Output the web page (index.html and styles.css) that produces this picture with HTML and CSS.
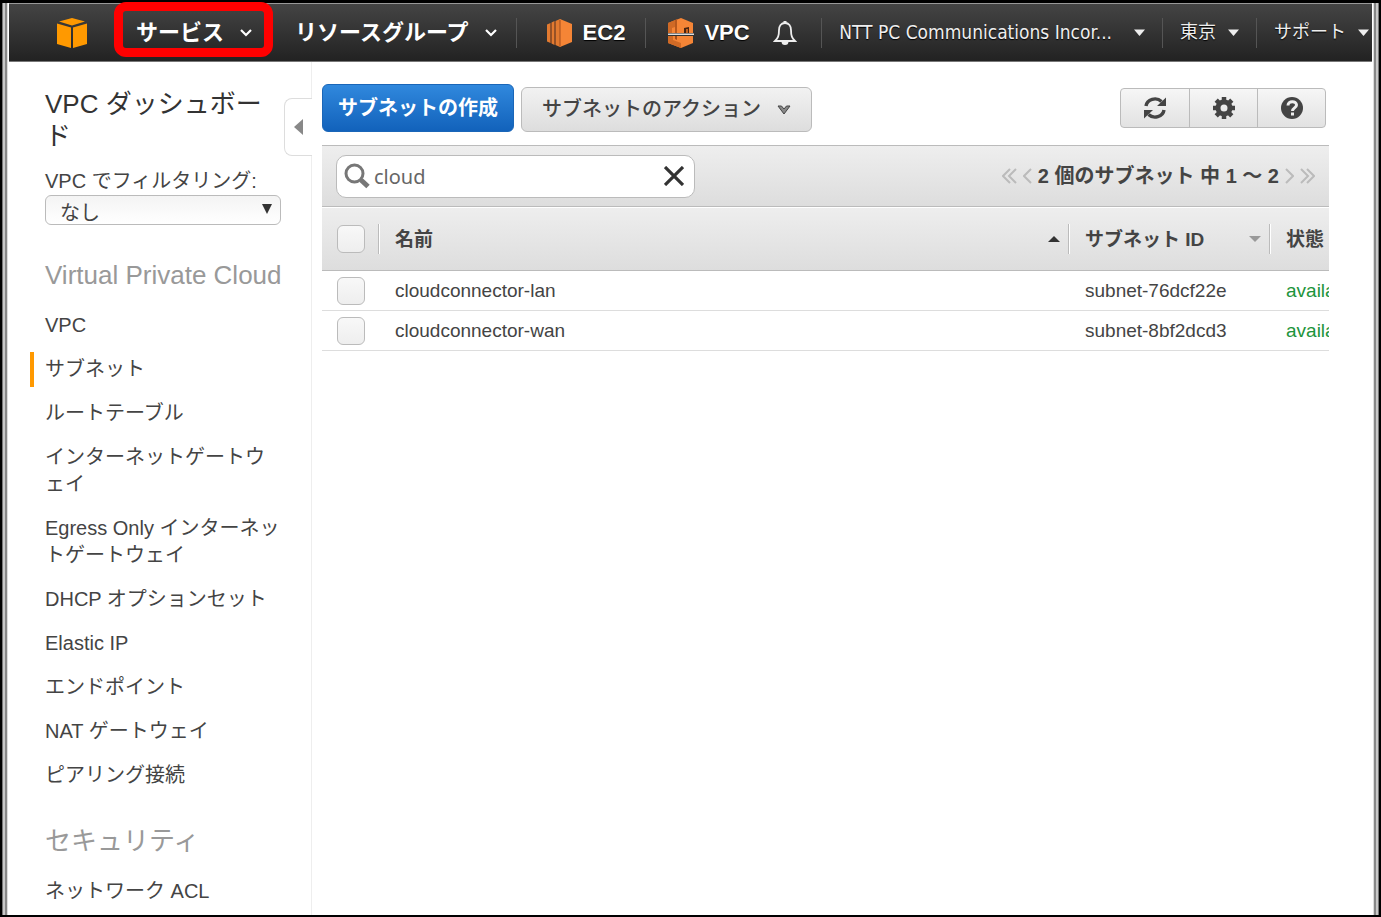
FILE: index.html
```html
<!DOCTYPE html>
<html lang="ja">
<head>
    <meta charset="UTF-8">
    <meta name="viewport" content="width=device-width, initial-scale=1.0">
    <title>VPC ダッシュボード</title>
    <link rel="stylesheet" href="styles.css">
</head>
<body>
<div class="window">

    <header class="topbar">
        <a href="#" class="logo" aria-label="AWS">
            <svg width="30" height="30" viewBox="0 0 30 30" fill="#ff9900">
                <path d="M15 0l13 3.500L15 7.500 2 3.500z"/>
                <path d="M0 5.500l14 4V30L0 26z"/>
                <path d="M30 5.500l-14 4V30l14-4z"/>
            </svg>
        </a>
        <button class="menu menu-services">サービス
            <svg width="12" height="8" viewBox="0 0 12 8"><path d="M1 1l5 5 5-5" fill="none" stroke="#fff" stroke-width="2.2"/></svg>
        </button>
        <button class="menu menu-groups">リソースグループ
            <svg width="12" height="8" viewBox="0 0 12 8"><path d="M1 1l5 5 5-5" fill="none" stroke="#fff" stroke-width="2.2"/></svg>
        </button>
        <a href="#" class="shortcut">
            <svg width="26" height="28" viewBox="0 0 26 28">
                <path d="M13 0l12 5v18l-12 5z" fill="#f58536"/>
                <path d="M8.500 2l4.500-2v28l-4.500-2z" fill="#e27a30"/>
                <path d="M4.500 3.500l3-1.500v24l-3-1.500z" fill="#e27a30"/>
                <path d="M0 5.500L3.500 4v20L0 22.500z" fill="#e27a30"/>
                <path d="M4 4v20M8 2.500v23M13 1v26" stroke="#a34f1c" fill="none"/>
            </svg>
            EC2
        </a>
        <a href="#" class="shortcut">
            <svg width="26" height="30" viewBox="0 0 26 30">
                <path d="M13 0l12 5v10H0V5z" fill="#f58536"/>
                <path d="M0 5l7-3v7l-3 1v5H0z" fill="#d06a26"/>
                <path d="M7 2l2-1v14H7z" fill="#b8591e"/>
                <path d="M16 10l5-1v6h-5z" fill="#4a2410"/>
                <path d="M18 11l2 0v4h-2z" fill="#c4621f"/>
                <path d="M0 15.500h26v1.500H0z" fill="#ddd"/>
                <path d="M0 18h25v7l-12 5-13-5z" fill="#f58536"/>
                <path d="M0 18h5v4l8 3v5L0 25z" fill="#d06a26"/>
                <path d="M7 18h2v4l-2-1z" fill="#a34f1c"/>
            </svg>
            VPC
        </a>
        <button class="bell" aria-label="通知">
            <svg width="24" height="26" viewBox="0 0 24 26">
                <path d="M12 3c-4 0-6 3-6 7 0 6-1 8-4 11h20c-3-3-4-5-4-11 0-4-2-7-6-7z" fill="none" stroke="#eee" stroke-width="1.8"/>
                <path d="M8.500 21.500a3.500 3.500 0 0 0 7 0zM10.500 1h3v2h-3z" fill="#eee"/>
            </svg>
        </button>
        <nav class="account">
            <button class="sub sub-name">NTT PC Communications Incor...
                <svg width="11" height="7" viewBox="0 0 11 7"><path d="M0 0.500h11L5.500 7z" fill="#eee"/></svg>
            </button>
            <button class="sub">東京
                <svg width="11" height="7" viewBox="0 0 11 7"><path d="M0 0.500h11L5.500 7z" fill="#eee"/></svg>
            </button>
            <button class="sub">サポート
                <svg width="11" height="7" viewBox="0 0 11 7"><path d="M0 0.500h11L5.500 7z" fill="#eee"/></svg>
            </button>
        </nav>
    </header>

    <div class="page">
        <aside class="sidebar">
            <button class="collapse" aria-label="閉じる">
                <svg width="9" height="16" viewBox="0 0 9 16"><path d="M9 0v16L0 8z" fill="#888"/></svg>
            </button>
            <a href="#" class="dashboard">VPC ダッシュボード</a>
            <label for="vpc-filter" class="filter-label">VPC でフィルタリング:</label>
            <div class="select">
                <select id="vpc-filter">
                    <option>なし</option>
                </select>
                <svg width="10" height="10" viewBox="0 0 10 10"><path d="M0 0h10L5 10z" fill="#333"/></svg>
            </div>

            <h2>Virtual Private Cloud</h2>
            <ul>
                <li><a href="#">VPC</a></li>
                <li class="active"><a href="#">サブネット</a></li>
                <li><a href="#">ルートテーブル</a></li>
                <li><a href="#">インターネットゲートウェイ</a></li>
                <li><a href="#">Egress Only インターネットゲートウェイ</a></li>
                <li><a href="#">DHCP オプションセット</a></li>
                <li><a href="#">Elastic IP</a></li>
                <li><a href="#">エンドポイント</a></li>
                <li><a href="#">NAT ゲートウェイ</a></li>
                <li><a href="#">ピアリング接続</a></li>
            </ul>

            <h2>セキュリティ</h2>
            <ul>
                <li><a href="#">ネットワーク ACL</a></li>
            </ul>
        </aside>

        <main class="content">
            <div class="actions">
                <button class="btn-primary">サブネットの作成</button>
                <button class="btn">サブネットのアクション
                    <svg width="14" height="10" viewBox="0 0 14 10"><path d="M1 1h3.500L7 4l2.500-3H13L7 9z" fill="#888" stroke="#444"/></svg>
                </button>
                <div class="tools">
                    <button aria-label="更新">
                        <svg width="24" height="22" viewBox="0 0 24 22">
                            <path d="M3 9a9 8 0 0 1 15.500-4.500M21 13a9 8 0 0 1-15.500 4.500" fill="none" stroke="#444" stroke-width="3.4"/>
                            <path d="M23 0.500V9h-9zM1 21.500V13h9z" fill="#444"/>
                        </svg>
                    </button>
                    <button aria-label="設定">
                        <svg width="24" height="24" viewBox="0 0 24 24">
                            <circle cx="12" cy="12" r="6" fill="none" stroke="#444" stroke-width="5"/>
                            <path d="M12 1v4M12 19v4M1 12h4M19 12h4M4.200 4.200l3 3M16.800 16.800l3 3M4.200 19.800l3-3M16.800 7.200l3-3" stroke="#444" stroke-width="4.5"/>
                        </svg>
                    </button>
                    <button aria-label="ヘルプ">
                        <svg width="24" height="24" viewBox="0 0 24 24">
                            <circle cx="12" cy="12" r="11" fill="#444"/>
                            <path d="M8 9.500c0-5 8.500-5 8.500-0.500 0 3-4 2.800-4 6" fill="none" stroke="#eee" stroke-width="3"/>
                            <path d="M11 16.500h3v3h-3z" fill="#eee"/>
                        </svg>
                    </button>
                </div>
            </div>

            <div class="searchbar">
                <div class="search">
                    <svg width="26" height="26" viewBox="0 0 26 26">
                        <circle cx="10.500" cy="10.500" r="8.500" fill="none" stroke="#777" stroke-width="3"/>
                        <path d="M17 17l7 6.500" stroke="#777" stroke-width="5"/>
                    </svg>
                    <input type="text" value="cloud" aria-label="検索">
                    <button aria-label="クリア">
                        <svg width="20" height="20" viewBox="0 0 20 20"><path d="M1 1l18 18M19 1L1 19" stroke="#333" stroke-width="3.2"/></svg>
                    </button>
                </div>
                <div class="pager">
                    <button aria-label="最初">
                        <svg width="15" height="16" viewBox="0 0 15 16"><path d="M8 1L1 8l7 7M14 1L7 8l7 7" fill="none" stroke="#bbb" stroke-width="2"/></svg>
                    </button>
                    <button aria-label="前へ">
                        <svg width="9" height="16" viewBox="0 0 9 16"><path d="M8 1L1 8l7 7" fill="none" stroke="#bbb" stroke-width="2"/></svg>
                    </button>
                    <span>2 個のサブネット 中 1 ～ 2</span>
                    <button aria-label="次へ">
                        <svg width="9" height="16" viewBox="0 0 9 16"><path d="M1 1l7 7-7 7" fill="none" stroke="#bbb" stroke-width="2"/></svg>
                    </button>
                    <button aria-label="最後">
                        <svg width="15" height="16" viewBox="0 0 15 16"><path d="M1 1l7 7-7 7M7 1l7 7-7 7" fill="none" stroke="#bbb" stroke-width="2"/></svg>
                    </button>
                </div>
            </div>

            <table class="subnets">
                <colgroup>
                    <col class="col-check">
                    <col>
                    <col class="col-id">
                    <col class="col-state">
                </colgroup>
                <thead>
                    <tr>
                        <th class="check"><input type="checkbox" aria-label="すべて選択"></th>
                        <th><div class="head">名前
                            <svg width="12" height="6" viewBox="0 0 12 6"><path d="M0 6h12L6 0z" fill="#333"/></svg>
                        </div></th>
                        <th><div class="head">サブネット ID
                            <svg width="12" height="6" viewBox="0 0 12 6"><path d="M0 0h12L6 6z" fill="#999"/></svg>
                        </div></th>
                        <th><div class="head">状態</div></th>
                    </tr>
                </thead>
                <tbody>
                    <tr>
                        <td class="check"><input type="checkbox" aria-label="cloudconnector-lan"></td>
                        <td>cloudconnector-lan</td>
                        <td>subnet-76dcf22e</td>
                        <td class="state">available</td>
                    </tr>
                    <tr>
                        <td class="check"><input type="checkbox" aria-label="cloudconnector-wan"></td>
                        <td>cloudconnector-wan</td>
                        <td>subnet-8bf2dcd3</td>
                        <td class="state">available</td>
                    </tr>
                </tbody>
            </table>
        </main>
    </div>

</div>
</body>
</html>
```
FILE: styles.css
```css
* {
    box-sizing: border-box;
}
body {
    margin: 0;
    height: 100vh;
    padding: 3px 2px 2px;
    background: #000;
    color: #444;
    font-family: "Liberation Sans", "Noto Sans CJK JP", sans-serif;
    font-size: 20px;
    line-height: 27px;
    overflow: hidden;
}
button {
    margin: 0;
    padding: 0;
    border: none;
    background: none;
    color: inherit;
    font: inherit;
    cursor: pointer;
}
a {
    color: inherit;
    text-decoration: none;
}
svg {
    display: block;
    flex: none;
}

/* window frame */
.window {
    display: flex;
    flex-direction: column;
    height: 100%;
    padding: 0 6px;
    background: linear-gradient(90deg, #777 0 1px, #c8c8c8 1px 3px, #888 3px 5px, #ddd 5px 6px, #fff 6px calc(100% - 6px), #ddd calc(100% - 6px) calc(100% - 5px), #888 calc(100% - 5px) calc(100% - 3px), #c8c8c8 calc(100% - 3px) calc(100% - 1px), #777 calc(100% - 1px));
}

/* top bar */
.topbar {
    display: flex;
    align-items: center;
    flex: none;
    height: 59px;
    margin: 0 1px;
    padding-left: 48px;
    border-top: 1px solid #999;
    border-bottom: 1px solid #777;
    background: linear-gradient(#444, #222);
    color: #fff;
    text-shadow: 0 1px 1px #000;
    white-space: nowrap;
}
.menu {
    display: flex;
    align-items: center;
    gap: 16px;
    font-size: 22px;
    font-weight: bold;
}
.menu-services {
    position: relative;
    margin: 0 43px 0 49px;
}
.menu-services::after {
    content: "";
    position: absolute;
    top: -17px;
    right: -21px;
    bottom: -11px;
    left: -22px;
    border: 9px solid #f00;
    border-radius: 12px;
}
.menu-groups {
    margin-right: 19px;
}
.shortcut {
    display: flex;
    align-items: center;
    gap: 10px;
    height: 30px;
    padding: 0 20px 0 22px;
    border-left: 1px solid #555;
    font-size: 22px;
    font-weight: bold;
}
.menu-groups + .shortcut {
    padding-left: 30px;
}
.bell {
    margin-left: 3px;
}
.account {
    display: flex;
    margin-left: auto;
    padding-right: 3px;
}
.sub {
    display: flex;
    align-items: center;
    gap: 12px;
    height: 30px;
    padding: 0 0 0 17px;
    border-left: 1px solid #555;
    color: #eee;
    font-size: 18px;
    text-shadow: inherit;
}
.sub + .sub {
    margin-left: 17px;
}
.sub-name {
    gap: 22px;
    font-family: "DejaVu Sans Condensed", "Noto Sans", sans-serif;
    font-size: 19px;
}

/* layout */
.page {
    display: flex;
    flex: 1;
    min-height: 0;
    overflow: hidden;
}
.sidebar {
    position: relative;
    flex: none;
    width: 304px;
    padding: 26px 30px 0 37px;
    border-right: 1px solid #eee;
}
.content {
    flex: 1;
    min-width: 0;
    margin: 22px 44px 0 10px;
}

/* sidebar */
.collapse {
    position: absolute;
    top: 36px;
    right: -1px;
    display: flex;
    align-items: center;
    width: 28px;
    height: 58px;
    padding-left: 9px;
    border: 1px solid #ddd;
    border-right: none;
    border-radius: 8px 0 0 8px;
    background: #fff;
}
.dashboard {
    display: block;
    width: 220px;
    color: #333;
    font-size: 26px;
    line-height: 32px;
}
.filter-label {
    display: block;
    margin-top: 16px;
}
.select {
    position: relative;
}
.select select {
    display: block;
    width: 100%;
    height: 30px;
    padding: 5px 14px 0;
    border: 1px solid #bbb;
    border-radius: 6px;
    background: linear-gradient(#f4f4f4, #fff);
    color: #444;
    font: inherit;
    line-height: 24px;
    appearance: none;
}
.select svg {
    position: absolute;
    top: 9px;
    right: 9px;
    pointer-events: none;
}
.sidebar h2 {
    margin: 34px 0 0;
    color: #999;
    font-size: 26px;
    font-weight: normal;
    line-height: 32px;
    white-space: nowrap;
}
.sidebar ul {
    margin: 21px 0 0;
    padding: 0;
    list-style: none;
}
.sidebar li {
    margin-bottom: 17px;
}
.sidebar .active {
    margin: -4px 0 13px -15px;
    padding: 4px 0 4px 11px;
    border-left: 4px solid #f90;
}
.sidebar ul + h2 {
    margin-top: 36px;
}

/* buttons */
.actions {
    display: flex;
    align-items: flex-end;
    gap: 7px;
    height: 48px;
}
.btn-primary {
    height: 48px;
    padding: 0 15px;
    border: 1px solid #1a66b8;
    border-radius: 6px;
    background: linear-gradient(#3088dd, #1262bb);
    color: #fff;
    font-weight: bold;
}
.btn {
    display: flex;
    align-items: center;
    gap: 16px;
    height: 45px;
    padding: 0 20px;
    border: 1px solid #bbb;
    border-radius: 6px;
    background: linear-gradient(#f2f2f2, #ddd);
    font-weight: 500;
}
.tools {
    display: flex;
    align-self: center;
    margin: 0 3px 0 auto;
    border: 1px solid #bbb;
    border-radius: 4px;
    background: linear-gradient(#f6f6f6, #e2e2e2);
}
.tools button {
    display: flex;
    align-items: center;
    justify-content: center;
    width: 68px;
    height: 38px;
}
.tools button + button {
    border-left: 1px solid #bbb;
}

/* search */
.searchbar {
    display: flex;
    align-items: center;
    justify-content: space-between;
    height: 62px;
    margin-top: 13px;
    padding: 0 14px;
    border-top: 1px solid #bbb;
    border-bottom: 1px solid #bbb;
    background: linear-gradient(#eee, #ddd);
}
.search {
    display: flex;
    align-items: center;
    width: 359px;
    height: 43px;
    padding: 0 10px 0 7px;
    border: 1px solid #bbb;
    border-radius: 10px;
    background: #fff;
}
.search input {
    flex: 1;
    min-width: 0;
    padding: 0 0 0 4px;
    border: none;
    outline: none;
    background: none;
    color: #666;
    font-family: "Noto Sans", sans-serif;
    font-size: 20px;
}
.pager {
    display: flex;
    align-items: center;
    gap: 6px;
    color: #444;
    font-weight: bold;
    white-space: nowrap;
}

/* table */
.subnets {
    width: 100%;
    border-collapse: separate;
    border-spacing: 0;
    table-layout: fixed;
    font-size: 19px;
}
.col-check {
    width: 56px;
}
.col-id {
    width: 201px;
}
.col-state {
    width: 60px;
}
.subnets thead {
    background: linear-gradient(#eee, #ddd);
}
.subnets th {
    height: 64px;
    padding: 0;
    border-top: 1px solid #fff;
    border-bottom: 1px solid #bbb;
    text-align: left;
}
.head {
    display: flex;
    align-items: center;
    justify-content: space-between;
    height: 30px;
    padding: 0 8px 0 16px;
    border-left: 1px solid #bbb;
    box-shadow: inset 1px 0 #fff;
    white-space: nowrap;
}
.subnets td {
    height: 40px;
    padding: 0 0 0 17px;
    border-bottom: 1px solid #ddd;
    overflow: hidden;
    white-space: nowrap;
}
.subnets .check {
    padding: 0 0 0 15px;
}
.subnets input {
    display: block;
    width: 28px;
    height: 28px;
    margin: 0;
    border: 1px solid #bbb;
    border-radius: 6px;
    background: linear-gradient(#f8f8f8, #eee);
    appearance: none;
}
.subnets .state {
    color: #1c943c;
}
```
